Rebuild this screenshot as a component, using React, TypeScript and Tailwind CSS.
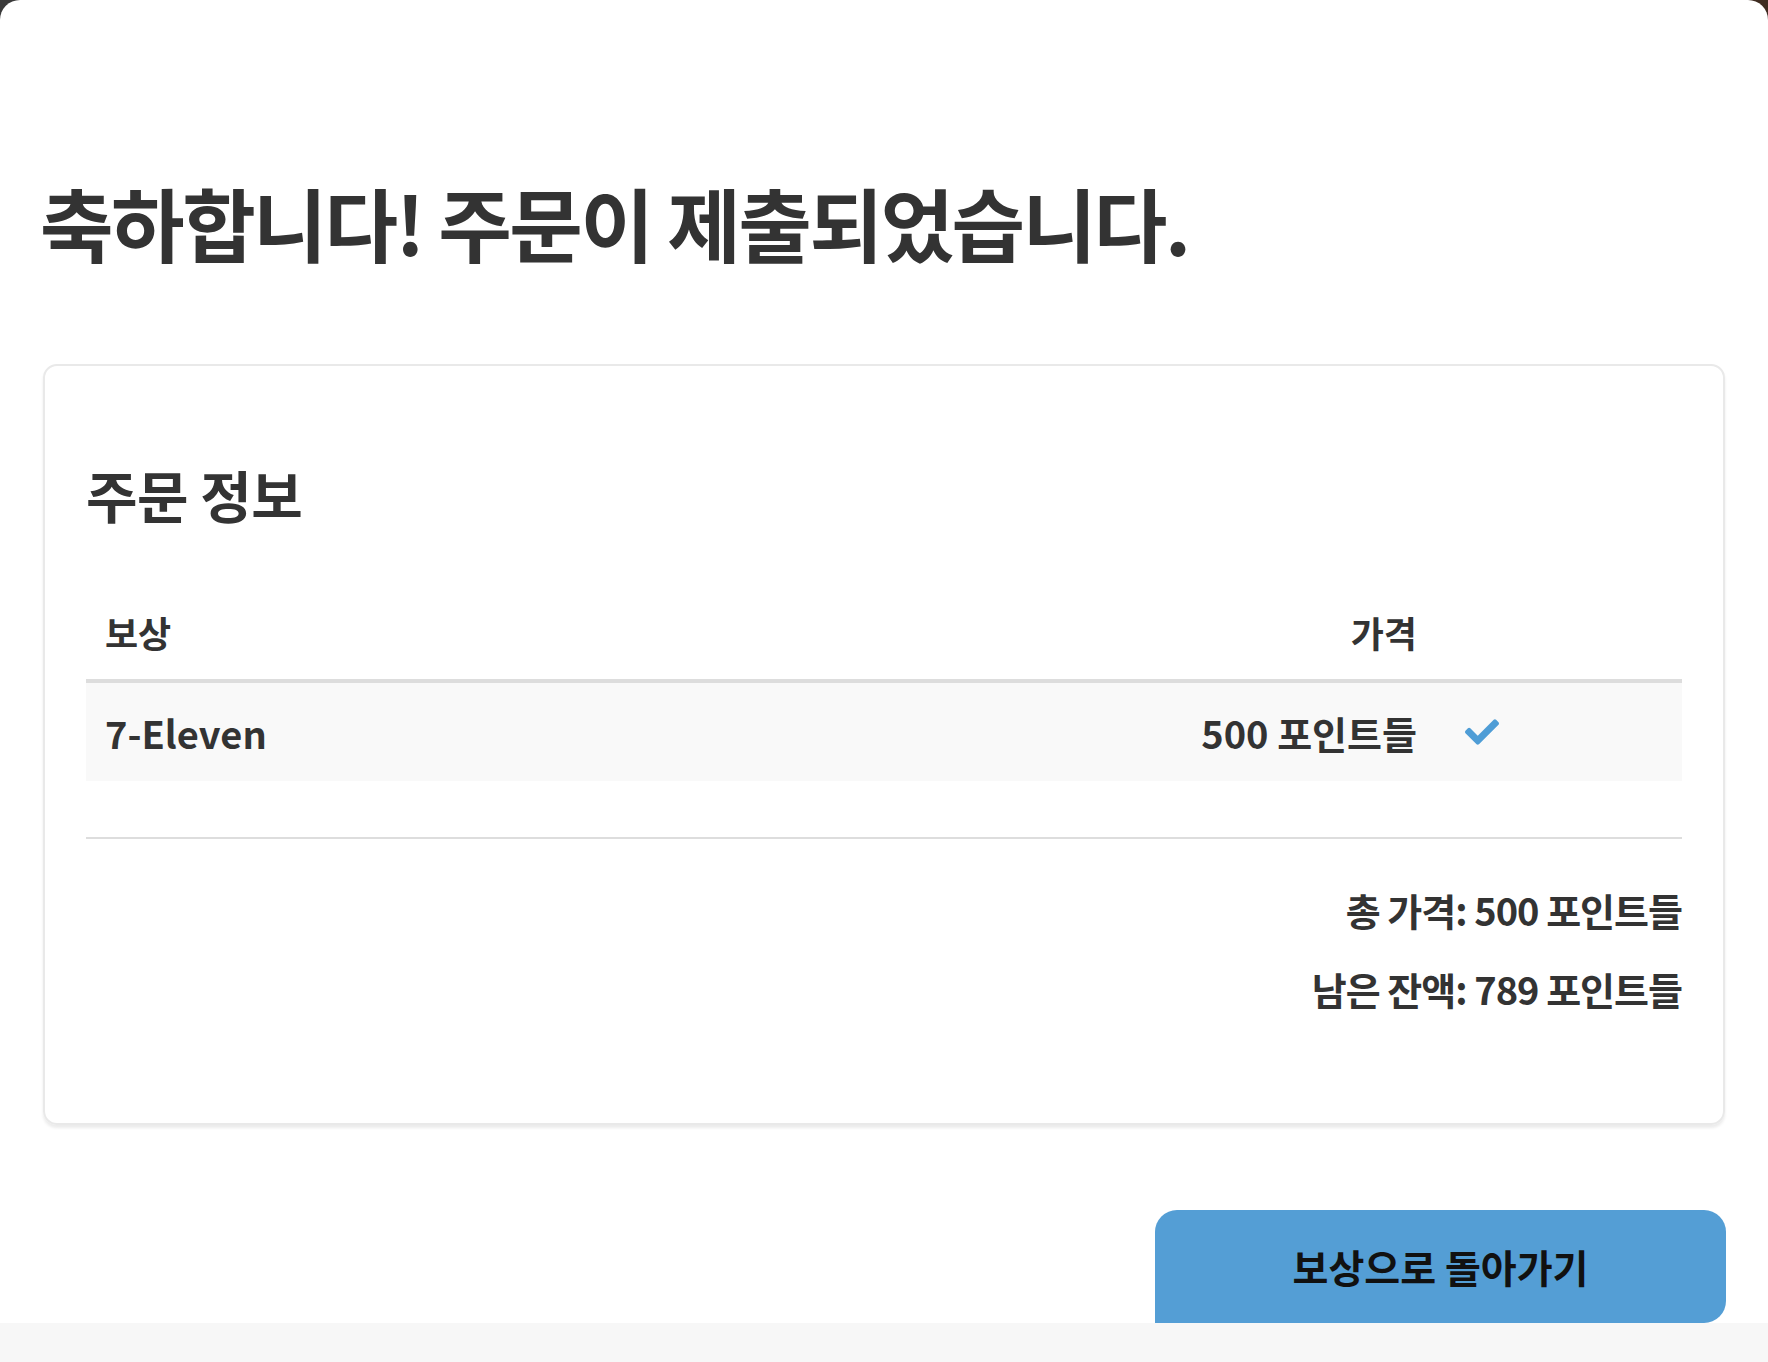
import { FaCheck } from 'react-icons/fa'

const FONT = { fontFamily: '"Noto Sans CJK KR", "Noto Sans", sans-serif' }

const ITEMS = [{ name: '7-Eleven', price: '500 포인트들', ok: true }]

function Row({ name, price, ok }: { name: string; price: string; ok?: boolean }) {
  return (
    <div className="flex h-[98px] items-center bg-[#f9f9f9] text-[38px] font-bold text-[#333]">
      <div className="flex-1 pl-[19px]">{name}</div>
      <div className="text-right">{price}</div>
      <div className="w-[265px] pl-[48px]">
        {ok && <FaCheck className="text-[#4f9dd6]" size={34} />}
      </div>
    </div>
  )
}

export default function App() {
  return (
    <div className="bg-gradient-to-r from-[#3a3a3a] to-[#3e2b20]" style={FONT}>
      <div className="flex min-h-[1362px] flex-col rounded-t-[20px] bg-white">
        <div className="flex-1 px-[43px]">
          {/* page title */}
          <h1 className="-ml-[3px] pt-[173px] text-[80px] leading-[96px] font-bold tracking-[-2.5px] text-[#333]">
            축하합니다! 주문이 제출되었습니다.
          </h1>

          {/* order card */}
          <section className="mt-[95px] rounded-[14px] border-2 border-[#e9e9e9] px-[41px] pt-[94px] pb-[110px] shadow-[0_3px_3px_rgba(0,0,0,0.08)]">
            <h2 className="text-[56px] leading-[68px] font-bold tracking-[-0.5px] text-[#333]">주문 정보</h2>

            <div className="mt-[56px]">
              <div className="flex h-[99px] items-center border-b-4 border-[#dddddd] text-[36px] font-bold text-[#333]">
                <div className="flex-1 pl-[19px]">보상</div>
                <div className="text-right">가격</div>
                <div className="w-[265px]" />
              </div>
              {ITEMS.map((it) => (
                <Row key={it.name} {...it} />
              ))}
            </div>

            <div className="mt-[56px] border-t-2 border-[#dddddd]" />

            <div className="mt-[47px] flex flex-col items-end gap-[31px] text-[38px] leading-[48px] font-bold tracking-[-1px] text-[#333]">
              <div>총 가격: 500 포인트들</div>
              <div>남은 잔액: 789 포인트들</div>
            </div>
          </section>

          <div className="mt-[85px] flex justify-end">
            <button
              type="button"
              className="-mr-[1px] flex h-[113px] w-[571px] items-center justify-center rounded-[22px] rounded-bl-none bg-[#549ed5] text-[39px] font-bold text-[#111]"
            >
              보상으로 돌아가기
            </button>
          </div>
        </div>
        <div className="h-[40px] bg-[#f7f7f7]" />
      </div>
    </div>
  )
}
